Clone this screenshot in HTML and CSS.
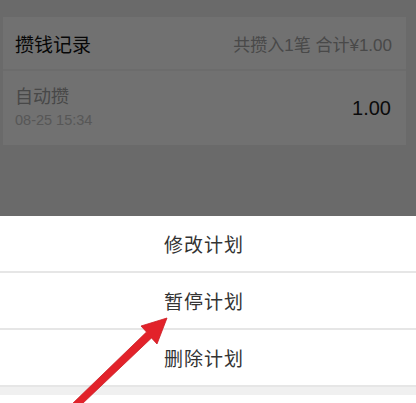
FILE: index.html
```html
<!DOCTYPE html>
<html lang="zh-CN">
<head>
<meta charset="utf-8">
<title>攒钱记录</title>
<link rel="stylesheet" href="styles.css">
</head>
<body>
<div class="page">
  <section class="card">
    <div class="card-head">
      <span class="card-title">攒钱记录</span>
      <span class="card-sum">共攒入1笔 合计¥1.00</span>
    </div>
    <div class="card-divider"></div>
    <div class="record">
      <div class="record-info">
        <span class="record-name">自动攒</span>
        <span class="record-time">08-25 15:34</span>
      </div>
      <span class="record-amount">1.00</span>
    </div>
  </section>
</div>
<div class="mask"></div>
<div class="sheet">
  <div class="sheet-item">修改计划</div>
  <div class="sheet-item">暂停计划</div>
  <div class="sheet-item">删除计划</div>
  <div class="sheet-gap"></div>
  <div class="sheet-cancel"></div>
</div>
<svg class="arrow" width="416" height="403" viewBox="0 0 416 403" aria-hidden="true">
  <polygon points="167,318 141,326 146.5,332 71,405 81,405 151.5,338 157,344" fill="#e2222a" stroke="#cc1d24" stroke-width="0.8" stroke-linejoin="round"/>
</svg>
</body>
</html>
```

FILE: styles.css
```css
html, body {
  margin: 0;
  padding: 0;
}
body {
  width: 416px;
  height: 403px;
  overflow: hidden;
  position: relative;
  display: flex;
  flex-direction: column;
  background: #efefef;
  font-family: "Liberation Sans", "Noto Sans CJK SC", sans-serif;
}
.page {
  padding-top: 17px;
}
.card {
  margin-left: 3px;
  width: 403px;
  background: #ffffff;
}
.card-head {
  height: 52px;
  display: flex;
  align-items: center;
  justify-content: space-between;
  padding: 0 14px 0 12px;
}
.card-title {
  font-size: 19px;
  color: #111111;
}
.card-sum {
  font-size: 17px;
  color: #a4a4a4;
}
.card-divider {
  height: 2px;
  background: #f4f4f4;
}
.record {
  height: 74px;
  display: flex;
  align-items: center;
  justify-content: space-between;
  padding: 0 15px 0 12px;
}
.record-info {
  display: flex;
  flex-direction: column;
  margin-top: -3px;
}
.record-name {
  font-size: 18px;
  line-height: 26px;
  color: #a2a2a2;
}
.record-time {
  font-size: 14.5px;
  line-height: 20px;
  color: #c4c4c4;
}
.record-amount {
  font-size: 20px;
  color: #1a1a1a;
}
.mask {
  position: absolute;
  inset: 0;
  background: rgba(0, 0, 0, 0.555);
}
.sheet {
  margin-top: auto;
  position: relative;
  z-index: 2;
  background: #ffffff;
}
.sheet-item {
  height: 55px;
  border-bottom: 2px solid #e6e6e6;
  display: flex;
  align-items: center;
  justify-content: center;
  font-size: 19px;
  letter-spacing: 1px;
  color: #333333;
  padding-right: 8px;
}
.sheet-gap {
  height: 8px;
  background: #f0f0f0;
}
.sheet-cancel {
  height: 8px;
  background: #ffffff;
}
.arrow {
  position: absolute;
  left: 0;
  top: 0;
  z-index: 3;
}
```
